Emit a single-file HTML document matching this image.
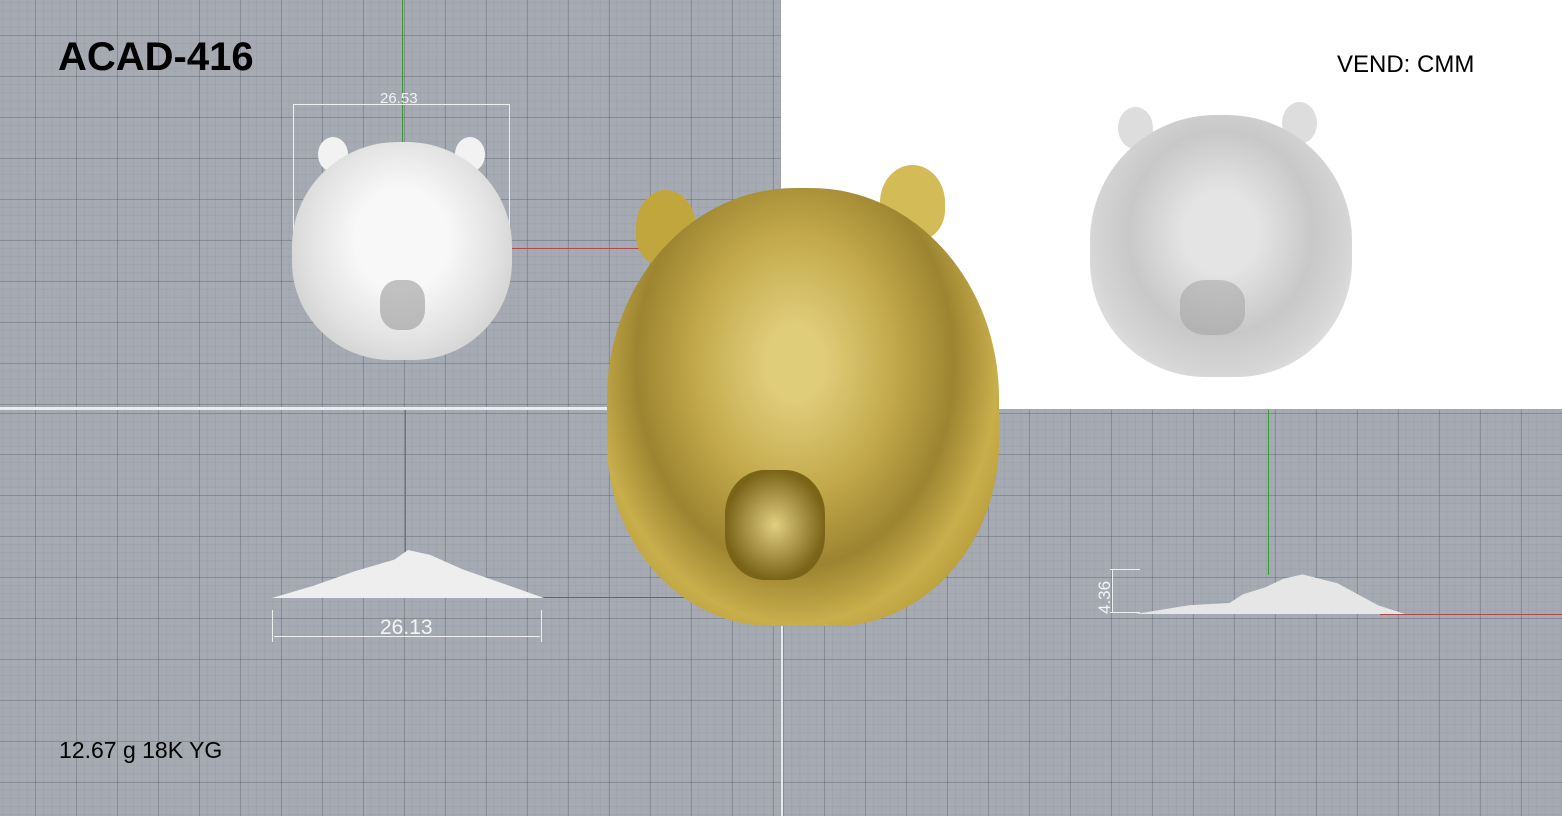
<!DOCTYPE html>
<html><head><style>
body{margin:0;width:1562px;height:816px;position:relative;overflow:hidden;font-family:"Liberation Sans",sans-serif;background:#a4a9b1}
.g{position:absolute;background-color:#a6abb3;
background-image:linear-gradient(90deg,rgba(85,90,100,.35) 1px,transparent 1px),linear-gradient(rgba(85,90,100,.35) 1px,transparent 1px),linear-gradient(90deg,rgba(95,100,110,.09) 1px,transparent 1px),linear-gradient(rgba(95,100,110,.09) 1px,transparent 1px);
background-size:41px 41px,41px 41px,8.2px 8.2px,8.2px 8.2px}
.a{position:absolute}
</style></head><body>
<div class="g" style="left:0;top:0;width:781px;height:407px;background-position:-6px -6px"></div>
<div class="g" style="left:0;top:410px;width:781px;height:406px;background-position:-6px 3px"></div>
<div class="g" style="left:783px;top:410px;width:779px;height:406px;background-position:0 3px"></div>
<div class="a" style="left:781px;top:0;width:781px;height:409px;background:#fff"></div>
<div class="a" style="left:0;top:407px;width:783px;height:3px;background:#e8ebf0"></div>
<div class="a" style="left:781px;top:407px;width:2px;height:409px;background:#e8ebf0"></div>
<div class="a" style="left:402px;top:0;width:1px;height:250px;background:#3a9a3a"></div>
<div class="a" style="left:500px;top:248px;width:281px;height:1px;background:#b04a4a"></div>
<div class="a" style="left:405px;top:410px;width:1px;height:145px;background:#3a9a3a"></div>
<div class="a" style="left:540px;top:597px;width:241px;height:1px;background:#b04a4a"></div>
<div class="a" style="left:1268px;top:410px;width:1px;height:165px;background:#3a9a3a"></div>
<div class="a" style="left:1380px;top:614px;width:182px;height:1px;background:#b04a4a"></div>
<div class="a" style="left:293px;top:104px;width:215px;height:150px;border:1px solid #eee;border-bottom:none"></div>
<div class="a" style="left:380px;top:90px;color:#f2f2f2;font-size:15px">26.53</div>
<div class="a" style="left:318px;top:137px;width:30px;height:35px;border-radius:50%;background:#f2f2f2"></div>
<div class="a" style="left:455px;top:137px;width:30px;height:35px;border-radius:50%;background:#f2f2f2"></div>
<div class="a" style="left:292px;top:142px;width:220px;height:218px;border-radius:48% 48% 45% 45%;background:radial-gradient(ellipse at 50% 45%,#f8f8f8 30%,#e2e2e2 60%,#d0d0d0 80%)"></div>
<div class="a" style="left:380px;top:280px;width:45px;height:50px;border-radius:40%;background:#8a8a8a;opacity:.5"></div>
<div class="a" style="left:272px;top:550px;width:272px;height:48px;background:#eee;clip-path:polygon(0 100%,15% 75%,30% 45%,45% 20%,50% 0,58% 10%,70% 40%,85% 70%,100% 100%)"></div>
<div class="a" style="left:272px;top:610px;width:1px;height:32px;background:#eee"></div>
<div class="a" style="left:541px;top:610px;width:1px;height:32px;background:#eee"></div>
<div class="a" style="left:274px;top:636px;width:266px;height:1px;background:#eee"></div>
<div class="a" style="left:380px;top:616px;color:#f4f4f4;font-size:21px">26.13</div>
<div class="a" style="left:1135px;top:570px;width:270px;height:44px;background:#e6e6e6;clip-path:polygon(0 100%,20% 80%,35% 75%,40% 55%,48% 40%,55% 20%,62% 10%,75% 30%,90% 80%,100% 100%)"></div>
<div class="a" style="left:1110px;top:569px;width:30px;height:1px;background:#eee"></div>
<div class="a" style="left:1110px;top:612px;width:30px;height:1px;background:#eee"></div>
<div class="a" style="left:1112px;top:569px;width:1px;height:44px;background:#eee"></div>
<div class="a" style="left:1095px;top:614px;color:#f4f4f4;font-size:17px;transform:rotate(-90deg);transform-origin:0 0">4.36</div>
<div class="a" style="left:1118px;top:107px;width:35px;height:42px;border-radius:50%;background:#ddd"></div>
<div class="a" style="left:1282px;top:102px;width:35px;height:42px;border-radius:50%;background:#ddd"></div>
<div class="a" style="left:1090px;top:115px;width:262px;height:262px;border-radius:48% 48% 44% 44%;background:radial-gradient(ellipse at 50% 45%,#e4e4e4 20%,#c8c8c8 50%,#d6d6d6 70%,#e8e8e8 85%)"></div>
<div class="a" style="left:1180px;top:280px;width:65px;height:55px;border-radius:40%;background:#999;opacity:.45"></div>
<div class="a" style="left:636px;top:190px;width:60px;height:75px;border-radius:50% 50% 40% 40%;background:#c0a63d"></div>
<div class="a" style="left:880px;top:165px;width:65px;height:75px;border-radius:50% 50% 40% 40%;background:#d3bb58"></div>
<div class="a" style="left:607px;top:188px;width:392px;height:438px;border-radius:48% 48% 42% 42%;background:radial-gradient(ellipse at 48% 40%,#e0cd7a 10%,#c2a84a 35%,#9c8430 55%,#c9ae4c 70%,#b09633 85%)"></div>
<div class="a" style="left:725px;top:470px;width:100px;height:110px;border-radius:40%;background:radial-gradient(#e2cf80,#7a6418 70%)"></div>
<div class="a" style="left:58px;top:35px;font-size:40px;font-weight:bold;color:#000">ACAD-416</div>
<div class="a" style="left:1337px;top:51px;font-size:24px;color:#000">VEND: CMM</div>
<div class="a" style="left:59px;top:737px;font-size:23px;color:#000">12.67 g 18K YG</div>
</body></html>
